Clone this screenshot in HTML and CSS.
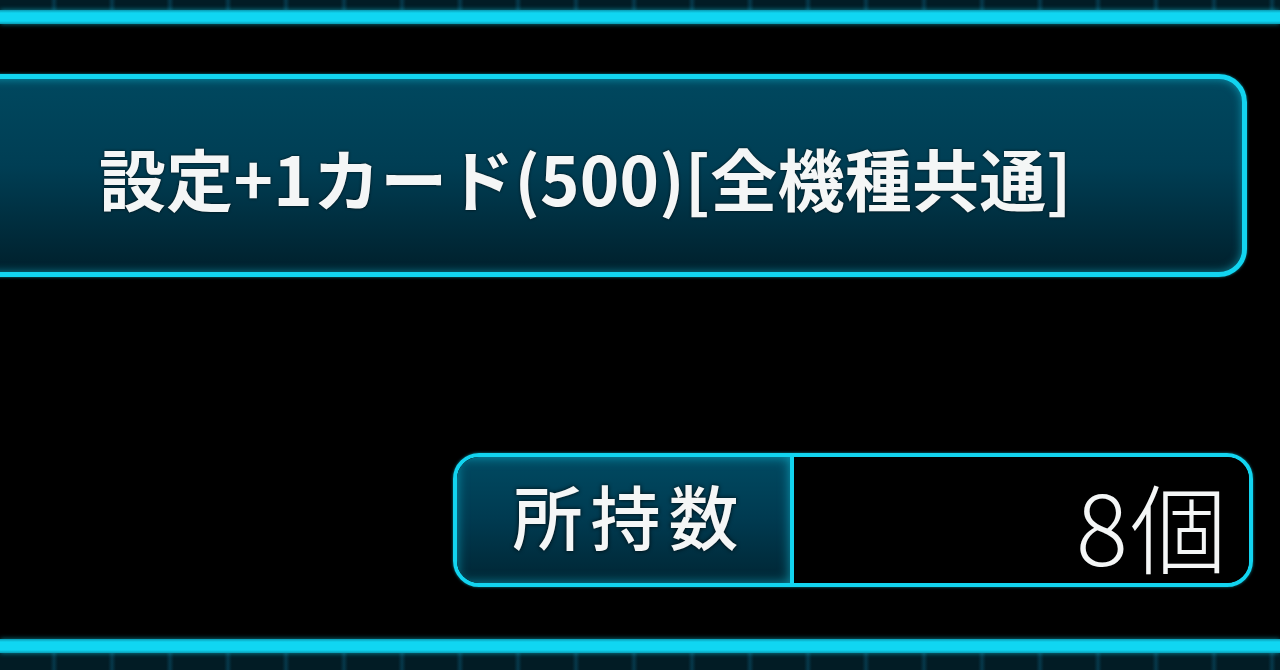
FILE: index.html
```html
<!DOCTYPE html>
<html lang="ja">
<head>
    <meta charset="UTF-8">
    <meta name="viewport" content="width=device-width, initial-scale=1.0">
    <title>アイテム詳細</title>
    <link rel="stylesheet" href="styles.css">
</head>
<body>

<div class="band band-top"></div>
<div class="rule"></div>

<div class="main">
    <div class="item-button">
        <span class="item-name">設定+1カード(500)[全機種共通]</span>
    </div>

    <div class="count-row">
        <div class="count-box">
            <div class="count-label"><span>所持数</span></div>
            <div class="count-value"><span>8個</span></div>
        </div>
    </div>
</div>

<div class="rule"></div>
<div class="band band-bottom"></div>

</body>
</html>
```

FILE: styles.css
```css
html, body {
    margin: 0;
    padding: 0;
}

body {
    width: 1280px;
    height: 670px;
    overflow: hidden;
    background: #000;
    font-family: "Noto Sans CJK JP", "Noto Sans", sans-serif;
    color: #f4f6f6;
    display: flex;
    flex-direction: column;
}

.band {
    background: repeating-linear-gradient(90deg,
        #021c25 0px, #021c25 50px,
        #06384a 54px, #021c25 58px);
}

.band-top {
    height: 10px;
}

.band-bottom {
    height: 17px;
}

.rule {
    height: 14px;
    background: linear-gradient(#0a9cb4 0px, #10d6f2 3px, #10d6f2 11px, #0a9cb4 14px);
    box-shadow: 0 0 5px rgba(16, 214, 242, 0.6);
    position: relative;
    z-index: 1;
}

.main {
    height: 616px;
    display: flex;
    flex-direction: column;
    padding-top: 50px;
    box-sizing: border-box;
}

.item-button {
    margin-left: -40px;
    width: 1287px;
    height: 203px;
    box-sizing: border-box;
    border: 5px solid #12d4f0;
    border-radius: 28px;
    background: linear-gradient(#00485f 0%, #003e54 45%, #00202c 100%);
    box-shadow: inset 0 0 10px rgba(18, 212, 240, 0.55), 0 0 3px rgba(18, 212, 240, 0.6);
    display: flex;
    align-items: center;
    justify-content: center;
    padding-right: 36px;
}

.item-name {
    font-size: 67px;
    font-weight: 700;
    letter-spacing: 0.2px;
    margin-top: 2px;
    text-shadow: 0 0 3px rgba(0, 0, 0, 0.8);
}

.count-row {
    display: flex;
    justify-content: flex-end;
    padding-right: 27px;
    margin-top: 176px;
}

.count-box {
    width: 800px;
    height: 134px;
    display: flex;
    box-sizing: border-box;
    border: 4px solid #12d4f0;
    border-radius: 26px;
    overflow: hidden;
    box-shadow: 0 0 3px rgba(18, 212, 240, 0.6);
}

.count-label {
    width: 333px;
    border-right: 4px solid #12d4f0;
    background: linear-gradient(#004a62 0%, #003a50 50%, #002634 100%);
    box-shadow: inset 0 0 12px rgba(18, 212, 240, 0.6);
    display: flex;
    align-items: center;
    justify-content: center;
}

.count-label span {
    font-size: 70px;
    font-weight: 500;
    letter-spacing: 8px;
    margin-left: 12px;
    margin-top: -10px;
    text-shadow: 0 0 4px rgba(0, 0, 0, 0.9);
}

.count-value {
    flex: 1;
    background: #000;
    display: flex;
    align-items: center;
    justify-content: flex-end;
    padding-right: 20px;
}

.count-value span {
    font-size: 97px;
    font-weight: 300;
    line-height: 1.2;
    letter-spacing: 2px;
    margin-top: 8px;
}
```
